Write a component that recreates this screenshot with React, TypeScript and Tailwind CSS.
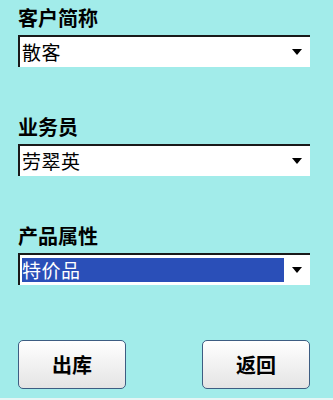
import { ReactNode } from "react";

const font = { fontFamily: '"Noto Sans CJK SC", "Noto Sans", sans-serif' };

function Field({ label, value, selected }: { label: string; value: string; selected?: boolean }) {
  return (
    <div className="flex flex-col">
      <div className="h-[35px] pt-[7px] text-[20px] leading-[22px] font-bold text-black">{label}</div>
      <div className="relative h-[32px] w-[292px] border-t-2 border-l-2 border-t-[#1a1a1a] border-l-[#1a1a1a] bg-white flex items-center pl-[2px]">
        <div
          className={`h-[24px] w-[262px] flex items-center text-[19px] leading-[24px] tracking-[0.5px] ${
            selected ? "bg-[#2a4fb8] text-white" : "text-black"
          }`}
        >
          {value}
        </div>
        {/* dropdown arrow */}
        <svg className="absolute right-[8px] top-[12px]" width="10" height="6" viewBox="0 0 10 6">
          <path d="M0 0 L10 0 L5 6 Z" fill="#000" />
        </svg>
      </div>
    </div>
  );
}

function Button({ children }: { children: ReactNode }) {
  return (
    <button className="h-[49px] w-[108px] rounded-[5px] border border-[#3d5d82] bg-gradient-to-b from-white to-[#e4e4e4] text-[20px] font-bold text-black flex items-center justify-center">
      {children}
    </button>
  );
}

export default function App() {
  return (
    <div style={font} className="w-[333px] h-[400px] flex flex-col bg-[#a2ecea]">
      <div className="flex-1 px-[18px] flex flex-col gap-[42px]">
        <Field label="客户简称" value="散客" />
        <Field label="业务员" value="劳翠英" />
        <Field label="产品属性" value="特价品" selected />
      </div>
      <div className="flex justify-between px-[18px] w-[328px] pb-[9px]">
        <Button>出库</Button>
        <Button>返回</Button>
      </div>
      <div className="h-[2px] bg-[#e6f6f5]" />
    </div>
  );
}
